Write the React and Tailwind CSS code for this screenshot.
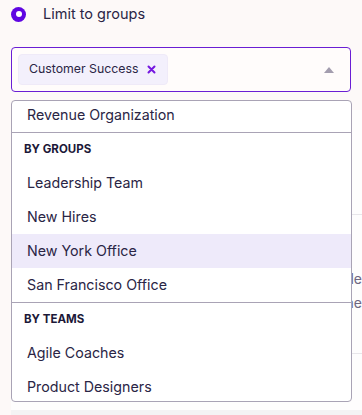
import React from 'react';

const groups = ['Leadership Team', 'New Hires', 'New York Office', 'San Francisco Office'];
const teams = ['Agile Coaches', 'Product Designers'];

function Item({ label, active }) {
  return (
    <div className={`h-[34px] flex items-center pl-[15px] text-[14.25px] text-[#2a2545] ${active ? 'bg-[#eeeafa]' : ''}`}>
      {label}
    </div>
  );
}

function Header({ label }) {
  return (
    <div className="h-[34px] border-t border-[#a9a3b5] flex items-center pl-[12px] text-[11.5px] font-bold text-[#1c1838]">
      {label}
    </div>
  );
}

export default function App() {
  return (
    <div
      className="relative w-[362px] h-[415px] overflow-hidden bg-[#fdf9f8]"
      style={{ fontFamily: 'Inter, "Noto Sans", sans-serif' }}
    >
      <label className="flex items-center gap-[17px] pl-[11px] h-[28px]">
        <span className="w-[15px] h-[15px] rounded-full bg-[#5f06e2] flex items-center justify-center">
          <span className="w-[6px] h-[6px] rounded-full bg-white" />
        </span>
        <span className="text-[14.5px] text-[#2a2545]">Limit to groups</span>
      </label>

      <div className="mx-[11px] mt-[19px] h-[45px] rounded-[4px] border border-[#6a1ed4] bg-[#fffcfb] flex items-center pl-[6px] pr-[16px]">
        <div className="h-[31px] rounded-[4px] bg-[#f3f0fc] border border-[#efeaf8] flex items-center pl-[10px] pr-[11px] gap-[9px]">
          <span className="text-[12.3px] text-[#2a2545]">Customer Success</span>
          <svg width="9" height="9" viewBox="0 0 9 9">
            <path d="M1.5 1.5 L7.5 7.5 M7.5 1.5 L1.5 7.5" stroke="#7417e0" strokeWidth="2" strokeLinecap="round" />
          </svg>
        </div>
        <svg className="ml-auto" width="10" height="6" viewBox="0 0 10 6">
          <path d="M5 0 L10 6 L0 6 Z" fill="#a39dae" />
        </svg>
      </div>

      {/* content behind the menu */}
      <div className="mt-[18px] ml-[11px] h-[300px] bg-[#fefdfd] flex flex-col">
        <div className="h-[104px]" />
        <div className="border-t border-[#e8e6ea] h-[139px] flex flex-col pt-[52px] items-end">
          <span className="text-[14px] leading-[24px] text-[#6d6680]">Available</span>
          <span className="text-[14px] leading-[24px] text-[#6d6680]">Some</span>
        </div>
        <div className="border-t border-[#e8e6ea] flex-1" />
      </div>
      <div className="ml-[11px] h-[20px] bg-[#f4f4f4]" />

      <div className="absolute left-[11px] top-[100px] w-[341px] h-[302px] rounded-[4px] border border-[#a9a3b5] bg-white overflow-hidden">
        <div className="-mt-[3px]">
          <Item label="Revenue Organization" />
          <Header label="BY GROUPS" />
          {groups.map((g) => (
            <Item key={g} label={g} active={g === 'New York Office'} />
          ))}
          <Header label="BY TEAMS" />
          {teams.map((t) => (
            <Item key={t} label={t} />
          ))}
        </div>
      </div>
    </div>
  );
}
